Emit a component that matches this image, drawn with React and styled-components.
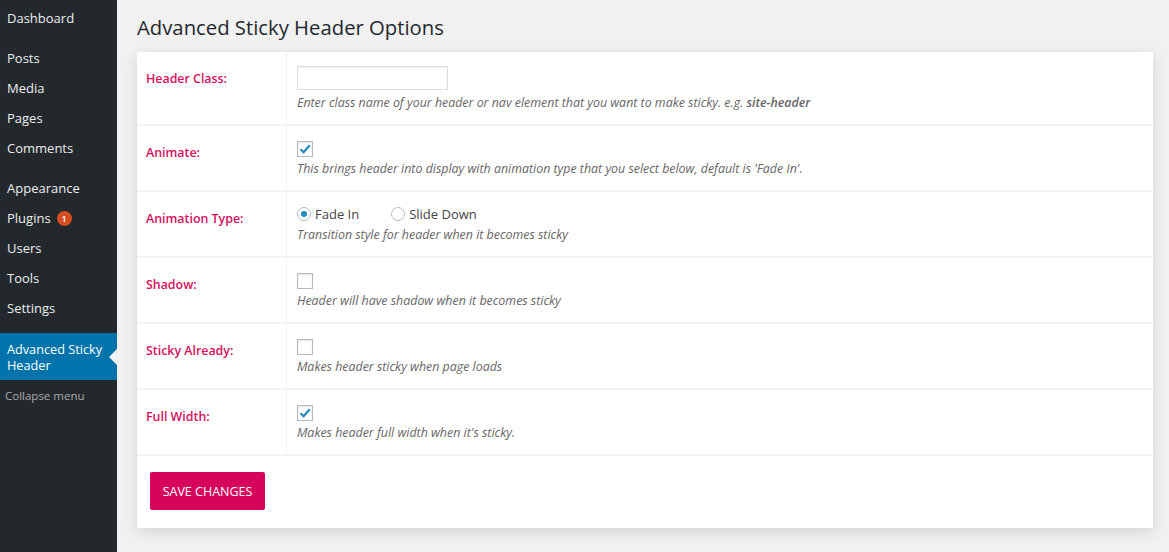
import React from 'react';
import styled, {createGlobalStyle} from 'styled-components';

const menuAccent = '#d6105e';

const GlobalStyle = createGlobalStyle`
  html, body {
    margin: 0;
    padding: 0;
    background: #f1f1f1;
  }
  body {
    font-family: 'Open Sans', 'Liberation Sans', sans-serif;
    color: #444;
  }
`;

const menuGroups = [
  ['Dashboard'],
  ['Posts', 'Media', 'Pages', 'Comments'],
  ['Appearance', 'Plugins', 'Users', 'Tools', 'Settings']
];

const options = [
  {
    label: 'Header Class:',
    type: 'text',
    help: <>Enter class name of your header or nav element that you want to make sticky. e.g. <b>site-header</b></>
  },
  {
    label: 'Animate:',
    type: 'checkbox',
    checked: true,
    help: "This brings header into display with animation type that you select below, default is 'Fade In'."
  },
  {
    label: 'Animation Type:',
    type: 'radio',
    help: 'Transition style for header when it becomes sticky'
  },
  {
    label: 'Shadow:',
    type: 'checkbox',
    checked: false,
    help: 'Header will have shadow when it becomes sticky'
  },
  {
    label: 'Sticky Already:',
    type: 'checkbox',
    checked: false,
    help: 'Makes header sticky when page loads'
  },
  {
    label: 'Full Width:',
    type: 'checkbox',
    checked: true,
    help: "Makes header full width when it's sticky."
  }
];

const CheckMark = () => (
  <svg width="12" height="10" viewBox="0 0 12 10">
    <path d="M1.5 5.2 L4.6 8.2 L10.8 1.2" fill="none" stroke="#1e8cbe" strokeWidth="2.2" />
  </svg>
);

export default function App() {
  const renderControl = option => {
    switch (option.type) {
      case 'text':
        return <TextInput type="text" />;
      case 'checkbox':
        return <Checkbox>{option.checked && <CheckMark />}</Checkbox>;
      case 'radio':
        return (
          <RadioGroup>
            <RadioLabel><Radio checked /> Fade In</RadioLabel>
            <RadioLabel><Radio /> Slide Down</RadioLabel>
          </RadioGroup>
        );
      default:
        return null;
    }
  };

  return (
    <>
      <GlobalStyle />
      <Self>
        <Sidebar>
          {menuGroups.map((group, gi) => (
            <MenuGroup key={`group_${gi}`}>
              {group.map(item => (
                <MenuItem key={item}>
                  {item}
                  {item === 'Plugins' && <Badge>1</Badge>}
                </MenuItem>
              ))}
            </MenuGroup>
          ))}
          <ActiveItem>Advanced Sticky Header</ActiveItem>
          <Collapse>Collapse menu</Collapse>
        </Sidebar>
        <Main>
          <Title>Advanced Sticky Header Options</Title>
          <Card>
            {options.map((option, i) => (
              <Row key={`row_${i}`} first={i === 0}>
                <Label>{option.label}</Label>
                <Field>
                  {renderControl(option)}
                  <Help>{option.help}</Help>
                </Field>
              </Row>
            ))}
            <Footer>
              <SaveButton>SAVE CHANGES</SaveButton>
            </Footer>
          </Card>
        </Main>
      </Self>
    </>
  );
}

const Self = styled.div`
  display: flex;
  min-height: 552px;
`;

const Sidebar = styled.div`
  width: 117px;
  flex-shrink: 0;
  background: #23282d;
  padding-top: 3px;
`;

const MenuGroup = styled.div`
  margin-bottom: 10px;
  &:last-of-type {
    margin-bottom: 11px;
  }
`;

const MenuItem = styled.div`
  display: flex;
  align-items: center;
  height: 30px;
  padding-left: 7px;
  font-size: 13px;
  color: #eee;
`;

const Badge = styled.span`
  display: inline-flex;
  align-items: center;
  justify-content: center;
  width: 15px;
  height: 15px;
  margin-left: 6px;
  border-radius: 50%;
  background: #d54e21;
  color: #fff;
  font-size: 9px;
  font-weight: 600;
`;

const ActiveItem = styled.div`
  position: relative;
  background: #0073aa;
  color: #fff;
  font-size: 12.7px;
  line-height: 16px;
  padding: 8px 10px 7px 7px;
  &::after {
    content: '';
    position: absolute;
    right: 0;
    top: 50%;
    margin-top: -8px;
    border: 8px solid transparent;
    border-right-color: #f1f1f1;
    border-left-width: 0;
  }
`;

const Collapse = styled.div`
  height: 30px;
  display: flex;
  align-items: center;
  padding-left: 5px;
  font-size: 11.5px;
  color: #aaa;
`;

const Main = styled.div`
  flex: 1;
  padding: 0 16px 23px 20px;
`;

const Title = styled.h1`
  margin: 0;
  padding: 14px 0 11px;
  font-size: 20.3px;
  line-height: 27px;
  font-weight: 400;
  color: #23282d;
`;

const Card = styled.div`
  background: #fff;
  box-shadow: 0 4px 14px rgba(0, 0, 0, 0.12);
`;

const Row = styled.div`
  display: grid;
  grid-template-columns: 150px 1fr;
  border-bottom: 2px solid #f3f3f3;
  min-height: ${({first}) => first ? 72 : 64}px;
`;

const Label = styled.div`
  padding: 18px 10px 0 9px;
  border-right: 1px solid #f1f1f1;
  font-size: 12.4px;
  line-height: 17px;
  font-weight: 600;
  color: ${menuAccent};
`;

const Field = styled.div`
  display: flex;
  flex-direction: column;
  align-items: flex-start;
  padding: 14px 10px 0 10px;
`;

const TextInput = styled.input`
  box-sizing: border-box;
  width: 151px;
  height: 24px;
  margin: 0 0 4px;
  border: 1px solid #ddd;
  box-shadow: inset 0 1px 2px rgba(0, 0, 0, 0.07);
  outline: none;
`;

const Checkbox = styled.span`
  box-sizing: border-box;
  display: inline-flex;
  align-items: center;
  justify-content: center;
  width: 16px;
  height: 16px;
  margin: 1px 0 3px;
  border: 1px solid #b4b9be;
  box-shadow: inset 0 1px 2px rgba(0, 0, 0, 0.1);
  background: #fff;
`;

const RadioGroup = styled.div`
  display: flex;
  gap: 32px;
  margin-top: -1px;
  margin-bottom: 3px;
`;

const RadioLabel = styled.span`
  display: inline-flex;
  align-items: center;
  gap: 4px;
  font-size: 13px;
  line-height: 18px;
  color: #444;
`;

const Radio = styled.span`
  box-sizing: border-box;
  position: relative;
  width: 14px;
  height: 14px;
  border-radius: 50%;
  border: 1px solid #b4b9be;
  background: #fff;
  &::after {
    content: '';
    display: ${({checked}) => checked ? 'block' : 'none'};
    position: absolute;
    left: 3px;
    top: 3px;
    width: 6px;
    height: 6px;
    border-radius: 50%;
    background: #1e8cbe;
  }
`;

const Help = styled.div`
  font-size: 12.4px;
  line-height: 18px;
  font-style: italic;
  color: #666;
  & b {
    font-weight: 600;
  }
`;

const Footer = styled.div`
  padding: 16px 13px 18px;
`;

const SaveButton = styled.button`
  height: 38px;
  width: 115px;
  border: none;
  border-radius: 2px;
  background: #d6045a;
  color: #fff;
  font-family: 'Open Sans', 'Liberation Sans', sans-serif;
  font-size: 12.5px;
  cursor: pointer;
`;
